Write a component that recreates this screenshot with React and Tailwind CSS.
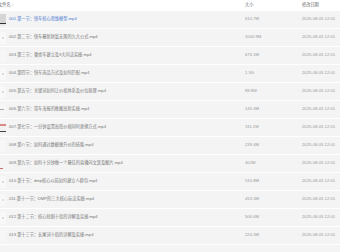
const rows = [
  { n: "001.第一节：快车核心思维模型.mp4", s: "610.7M", thumb: "dark" },
  { n: "002.第二节：快车最新财富无限的九大公式.mp4", s: "1000.9M", thumb: "light" },
  { n: "003.第三节：餐桌车建立及3大问法实操.mp4", s: "676.1M", thumb: "none" },
  { n: "004.第四节：快车选品方式及如何匹配.mp4", s: "1.3G", thumb: "light" },
  { n: "005.第五节：关键词如何让价格体系及价位原理.mp4", s: "89.8M", thumb: "light" },
  { n: "006.第六节：带车海报的推图高新实操.mp4", s: "145.3M", thumb: "mark" },
  { n: "007.第七节：一分钟设置高低价格同时更换方式.mp4", s: "115.1M", thumb: "red" },
  { n: "008.第八节：如何通过数据做升价的技能.mp4", s: "239.4M", thumb: "none" },
  { n: "009.第九节：如何十分钟做一个最佳的直播间文案及图片.mp4", s: "402M", thumb: "redmark" },
  { n: "010.第十节：dmp核心以前如何建立人群包.mp4", s: "515.8M", thumb: "light" },
  { n: "011.第十一节：DMP的三大核心玩法实操.mp4", s: "453.3M", thumb: "light" },
  { n: "012.第十二节：核心短剧十指的详解及实操.mp4", s: "506.6M", thumb: "light" },
  { n: "013.第十三节：长尾词十指的详解及实操.mp4", s: "224.3M", thumb: "none" },
];

function Thumb({ t }) {
  if (t === "dark")
    return (
      <div className="w-[6px] h-[12px] flex flex-col">
        <div className="flex-1 bg-[#d6d6d6]" />
        <div className="h-[1px] bg-[#333]" />
        <div className="h-[2px] bg-[#e8e8e8]" />
      </div>
    );
  if (t === "red")
    return (
      <div className="w-[6px] h-[12px] flex flex-col bg-[#f2f2f2]">
        <div className="h-[2px] mt-[2px] bg-[#d98a80]" />
        <div className="flex-1" />
        <div className="h-[1px] mb-[2px] bg-[#444]" />
      </div>
    );
  if (t === "redmark")
    return (
      <div className="w-[6px] h-[12px] flex flex-col justify-end bg-[#f4f4f4]">
        <div className="h-[1px] w-[3px] mb-[1px] bg-[#d46a6a]" />
      </div>
    );
  if (t === "mark")
    return (
      <div className="w-[6px] h-[12px] flex flex-col justify-center bg-[#f6f6f6]">
        <div className="h-[1px] w-[4px] bg-[#aaa]" />
      </div>
    );
  if (t === "light")
    return (
      <div className="w-[6px] h-[12px] flex flex-col justify-center items-center bg-[#f8f8f8]">
        <div className="h-[2px] w-[2px] bg-[#ddd]" />
      </div>
    );
  return <div className="w-[6px] h-[12px] bg-[#f7f7f7]" />;
}

export default function App() {
  return (
    <div className="w-[340px] h-[252px] overflow-hidden bg-white font-['Liberation_Sans','Noto_Sans_CJK_SC',sans-serif] text-[4.2px] leading-none">
      <div className="flex h-[11px] items-center text-[#666]">
        <div className="flex-1 -ml-[2px]">文件名 ↑</div>
        <div className="w-[57px]">大小</div>
        <div className="w-[38px]">修改日期</div>
      </div>
      {rows.map((r, i) => (
        <div key={i} className="flex h-[17px] mb-[1px] items-center bg-[#f4f4f4]">
          <div className="flex-1 flex items-center">
            <Thumb t={r.thumb} />
            <span className={"ml-[3px] whitespace-nowrap " + (i === 0 ? "text-[#4a78d0]" : "text-[#777]")}>{r.n}</span>
          </div>
          <div className="w-[57px] text-[#999]">{r.s}</div>
          <div className="w-[38px] text-[#999] whitespace-nowrap">2025-08-05 12:01</div>
        </div>
      ))}
      <div className="h-[17px] bg-[#f4f4f4]" />
    </div>
  );
}
